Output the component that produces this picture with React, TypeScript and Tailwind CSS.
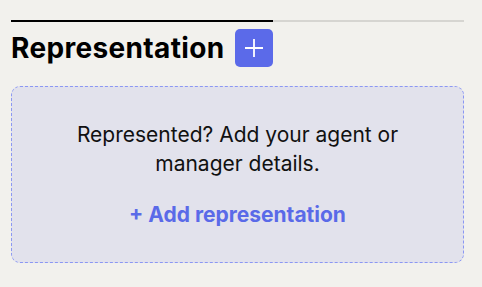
import React from "react";

function PlusIcon() {
  return (
    <svg width="18" height="18" viewBox="0 0 18 18" fill="none">
      <path d="M9 0v18M0 9h18" stroke="white" strokeWidth="1.8" />
    </svg>
  );
}

export default function App() {
  return (
    <div className="min-h-[287px] w-[482px] bg-[#f2f1ed] px-[11px] pt-[20px] font-['Inter',sans-serif] text-black">
      <div className="flex w-[453px]">
        <div className="h-[2px] w-[262px] bg-black" />
        <div className="h-[2px] flex-1 bg-[#d6d5d1]" />
      </div>
      <div className="mt-[7px] flex items-center gap-[10px]">
        <h2 className="text-[28px] font-bold leading-[38px] tracking-[0.35px]">Representation</h2>
        <button className="flex h-[38px] w-[38px] items-center justify-center rounded-[5px] bg-[#5b6ae9]">
          <PlusIcon />
        </button>
      </div>
      <div className="mt-[19px] flex h-[177px] w-[453px] flex-col items-center rounded-[9px] border border-dashed border-[#8b97f3] bg-[#e2e2ec] pt-[33px]">
        <p className="w-[360px] text-center text-[21px] leading-[29px] text-[#111]">
          Represented? Add your agent or manager details.
        </p>
        <button className="mt-[25px] text-[21px] font-bold leading-[24px] text-[#5a6ae8]">
          + Add representation
        </button>
      </div>
    </div>
  );
}
